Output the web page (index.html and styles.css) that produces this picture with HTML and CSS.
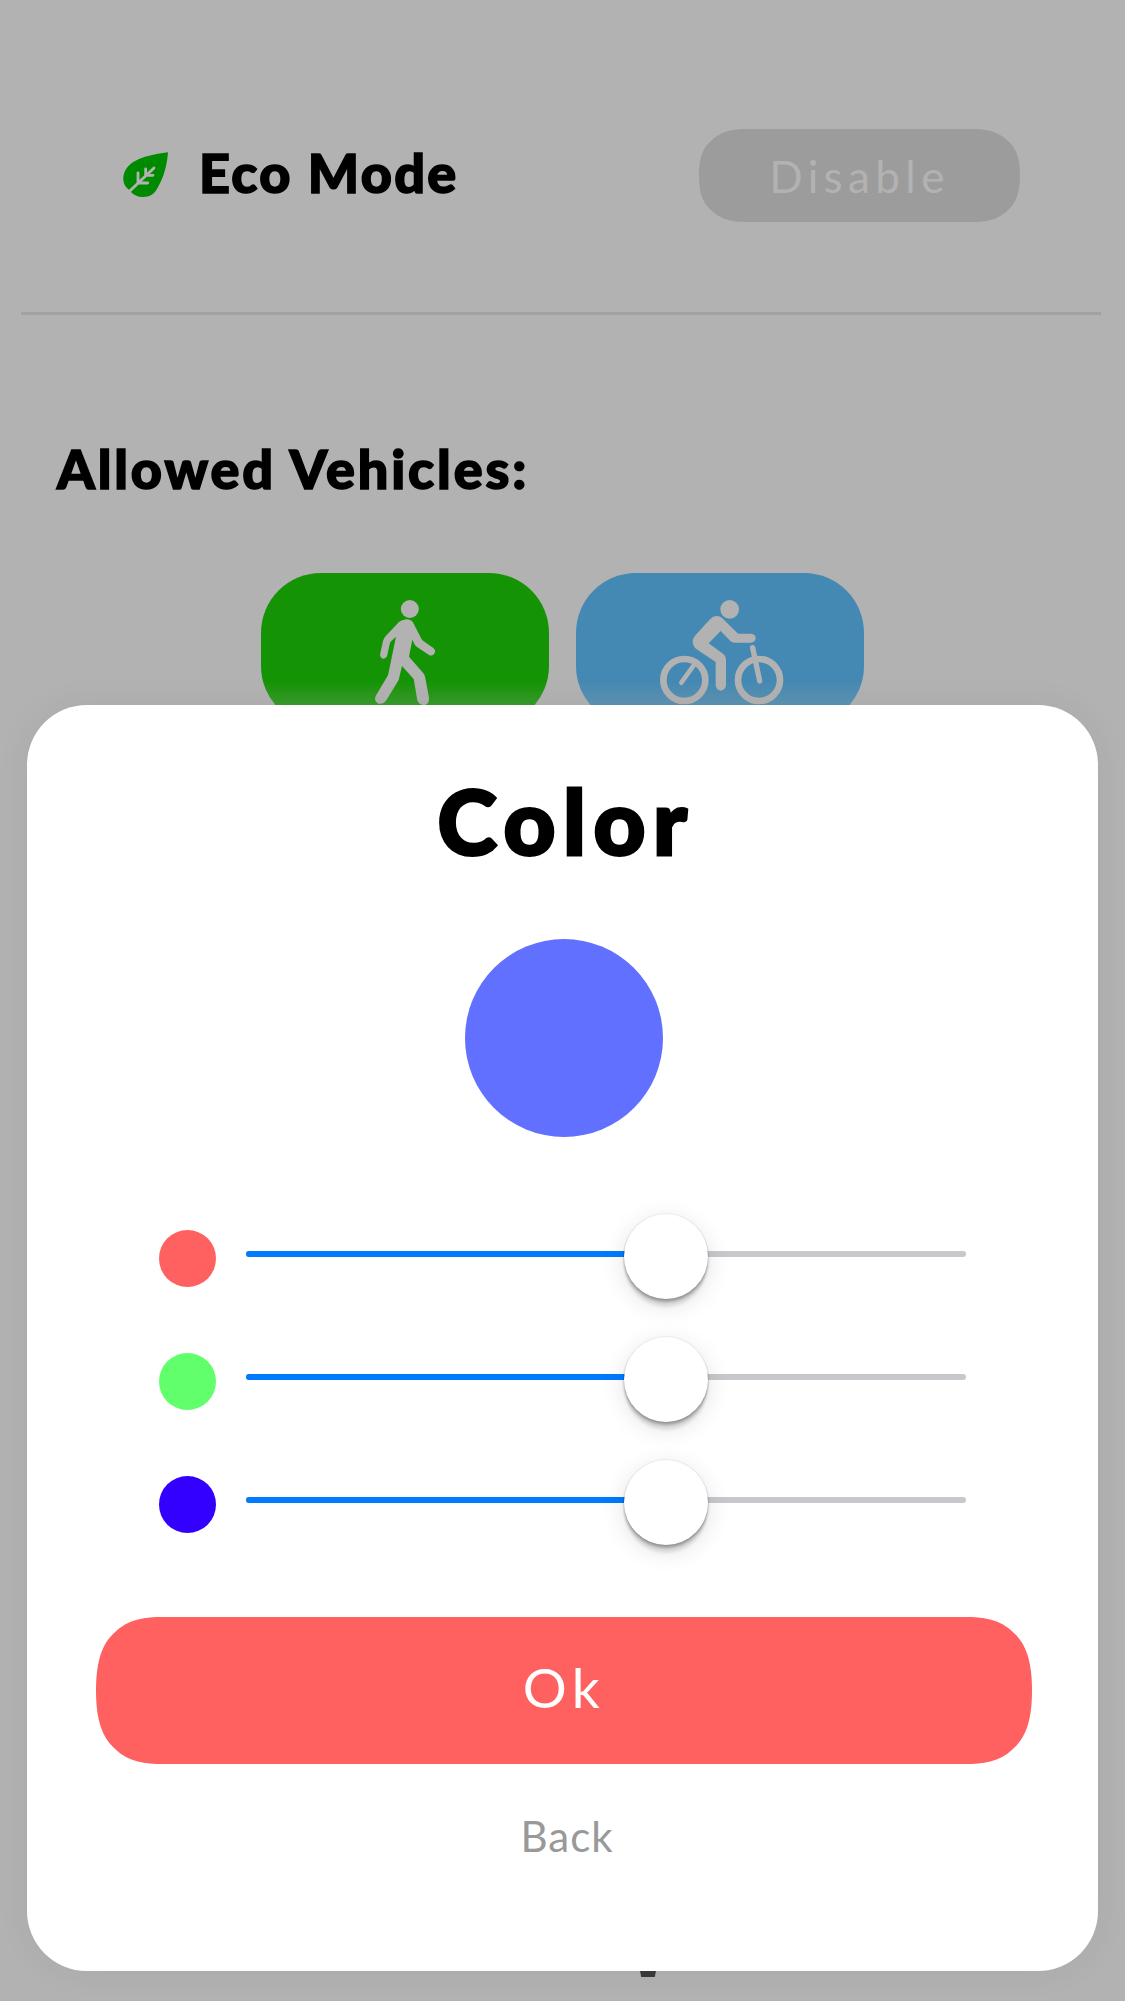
FILE: index.html
```html
<!DOCTYPE html>
<html lang="en">
<head>
<meta charset="utf-8">
<title>Color</title>
<link rel="stylesheet" href="styles.css">
</head>
<body>
<main class="settings">
  <section class="eco">
    <svg class="leaf" viewBox="39 36 135 135">
      <path fill="#008a00" d="M174 37C118 44 67 57 48 88C33 113 40 139 58 150L65 158C84 177 124 176 139 150C161 115 171 77 174 37Z"/>
      <path fill="none" stroke="#b2b2b2" stroke-width="8.500" stroke-linecap="round" d="M57 155L132 84M84 99V129H113M107 87V106H129"/>
    </svg>
    <h2 class="eco-title">Eco Mode</h2>
    <button class="disable">Disable</button>
  </section>
  <hr class="divider">
  <h2 class="vehicles-title">Allowed Vehicles:</h2>
  <div class="vehicles">
    <div class="vehicle walk">
      <svg viewBox="33 39 864 459">
        <circle cx="479.500" cy="147" r="27"/>
        <path d="M470 178Q484 178 490 189L514 236Q516 240 520 243L549 263Q558 269 554 279Q548 290 537 285L500 260Q494 256 492 250L487 239L477 290L519 338Q525 345 526 354L537 414Q538 429 527 434Q508 438 502 421L491 357L456 318L446 360L409 421Q400 434 385 431Q371 423 377 408L414 346L438 230L423 244Q420 247 419 253L411 289Q407 297 398 296Q390 293 390 284L399 243Q401 234 408 227L439 194Q452 179 470 178Z"/>
      </svg>
    </div>
    <div class="vehicle bike">
      <svg viewBox="48 39 864 459">
        <circle cx="509" cy="148" r="28"/>
        <g fill="none" stroke="#b2b2b2" stroke-linecap="round">
          <circle cx="373" cy="360" r="63" stroke-width="20"/>
          <circle cx="597" cy="360" r="63" stroke-width="20"/>
          <path stroke-width="14" d="M404 312L364 368"/>
          <path stroke-width="16" d="M578 263L599 363"/>
        </g>
        <path d="M470 168Q480 168 487 175L531 218Q533 221 538 221H574Q587 223 587 234Q586 246 574 248H525Q516 248 511 243L482 213L446 250L489 281Q498 288 498 300V376Q497 391 482 392Q468 391 467 376V306L410 268Q399 260 398 245Q398 236 405 227L450 178Q459 168 470 168Z"/>
      </svg>
    </div>
  </div>
</main>
<div class="stroke-end"></div>
<div class="modal">
  <h1 class="title">Color</h1>
  <div class="swatch"></div>
  <div class="sliders">
    <div class="row"><i class="dot red"></i><div class="track"><div class="fill"></div><div class="knob"></div></div></div>
    <div class="row"><i class="dot green"></i><div class="track"><div class="fill"></div><div class="knob"></div></div></div>
    <div class="row"><i class="dot blue"></i><div class="track"><div class="fill"></div><div class="knob"></div></div></div>
  </div>
  <button class="ok">Ok</button>
  <button class="back">Back</button>
</div>
</body>
</html>
```
FILE: styles.css
```css
* { box-sizing: border-box; }
body {
  margin: 0;
  height: 2001px;
  position: relative;
  overflow: hidden;
  background: #b2b2b2;
  color: #000;
  font-family: Lato, sans-serif;
}
h1, h2 { margin: 0; white-space: nowrap; }
button { border: 0; padding: 0; background: none; font-family: inherit; }

.settings { height: 705px; overflow: hidden; position: relative; }
.settings::after {
  content: "";
  position: absolute;
  inset: 680px 0 0;
  background: linear-gradient(rgba(178, 178, 178, 0), rgba(178, 178, 178, .24));
}
.eco {
  display: flex;
  height: 312px;
  padding: 129px 105px 0 123px;
}
.leaf { width: 45px; height: 45px; margin-top: 23px; }
.eco-title {
  margin: 11px 0 0 31px;
  font-size: 54px;
  line-height: 66px;
  font-weight: 900;
  letter-spacing: 2.3px;
  -webkit-text-stroke: 1.6px #000;
}
.disable {
  width: 321px;
  height: 93px;
  margin-left: auto;
  padding: 1px 0 0;
  background: #9c9c9c;
  clip-path: path("M0 46.500C0 27 5 18 12 12C19 5 28 0 46 0H275C293 0 302 5 309 12C316 18 321 27 321 46.500C321 66 316 75 309 81C302 88 293 93 275 93H46C28 93 19 88 12 81C5 75 0 66 0 46.500Z");
  color: #b2b2b2;
  font-size: 44px;
  letter-spacing: 5.4px;
}
.divider {
  height: 3px;
  margin: 0 24px 0 21px;
  border: 0;
  background: #a2a2a2;
}
.vehicles-title {
  margin: 121px 0 0 57px;
  font-size: 54px;
  line-height: 66px;
  font-weight: 900;
  letter-spacing: 2.85px;
  -webkit-text-stroke: 1.6px #000;
}
.vehicles {
  display: flex;
  justify-content: center;
  gap: 27px;
  margin-top: 71px;
}
.vehicle { width: 288px; height: 153px; border-radius: 60px; fill: #b2b2b2; }
.vehicle svg { display: block; width: 288px; height: 153px; }
.walk { background: #149404; }
.bike { background: #4489b3; }

.stroke-end {
  position: absolute;
  left: 639px;
  top: 1965px;
  width: 18px;
  height: 12px;
  background: #3b3b3b;
  clip-path: polygon(0 0, 100% 0, 88% 100%, 12% 100%);
}

.modal {
  position: absolute;
  left: 27px;
  top: 705px;
  width: 1071px;
  height: 1266px;
  border-radius: 60px;
  background: #fff;
  box-shadow: 0 0 36px rgba(0, 0, 0, .05);
  display: flex;
  flex-direction: column;
  align-items: center;
}
.title {
  margin-top: 61px;
  padding-left: 7px;
  font-size: 90px;
  line-height: 108px;
  font-weight: 900;
  letter-spacing: 7.6px;
  -webkit-text-stroke: 3px #000;
}
.swatch {
  width: 198px;
  height: 198px;
  margin: 65px 0 0 3px;
  border-radius: 50%;
  background: #6170ff;
}
.sliders {
  width: 807px;
  margin: 77px 0 0;
  display: grid;
  gap: 38px;
}
.row { height: 85px; display: flex; align-items: center; gap: 30px; }
.dot { width: 57px; height: 57px; margin-top: 4px; border-radius: 50%; }
.red { background: #ff6161; }
.green { background: #61ff6b; }
.blue { background: #3300ff; }
.track {
  position: relative;
  flex: 1;
  height: 6px;
  margin-top: -5px;
  border-radius: 3px;
  background: #c7c7cc;
}
.fill { width: 400px; height: 6px; border-radius: 3px; background: #007aff; }
.knob {
  position: absolute;
  left: 378px;
  top: -37px;
  width: 84px;
  height: 85px;
  border-radius: 50%;
  background: #fff;
  box-shadow: 0 0 0 1px rgba(0, 0, 0, .05), 0 9px 3px -1px rgba(0, 0, 0, .09), 0 3px 3px rgba(0, 0, 0, .28), 0 6px 24px rgba(0, 0, 0, .12);
}
.ok {
  width: 936px;
  height: 147px;
  flex: none;
  margin: 72px 0 0 3px;
  padding: 0 0 7px;
  background: #ff6161;
  clip-path: path("M0 73.500C0 42 7 27 17 17C27 7 38 0 66 0H870C898 0 909 7 919 17C929 27 936 42 936 73.500C936 105 929 120 919 130C909 140 898 147 870 147H66C38 147 27 140 17 130C7 120 0 105 0 73.500Z");
  color: #fff;
  font-size: 55px;
  letter-spacing: 5.5px;
}
.back {
  margin: 47px 0 0 9px;
  color: #999;
  font-size: 42px;
  line-height: 50px;
  letter-spacing: 1px;
}
```
